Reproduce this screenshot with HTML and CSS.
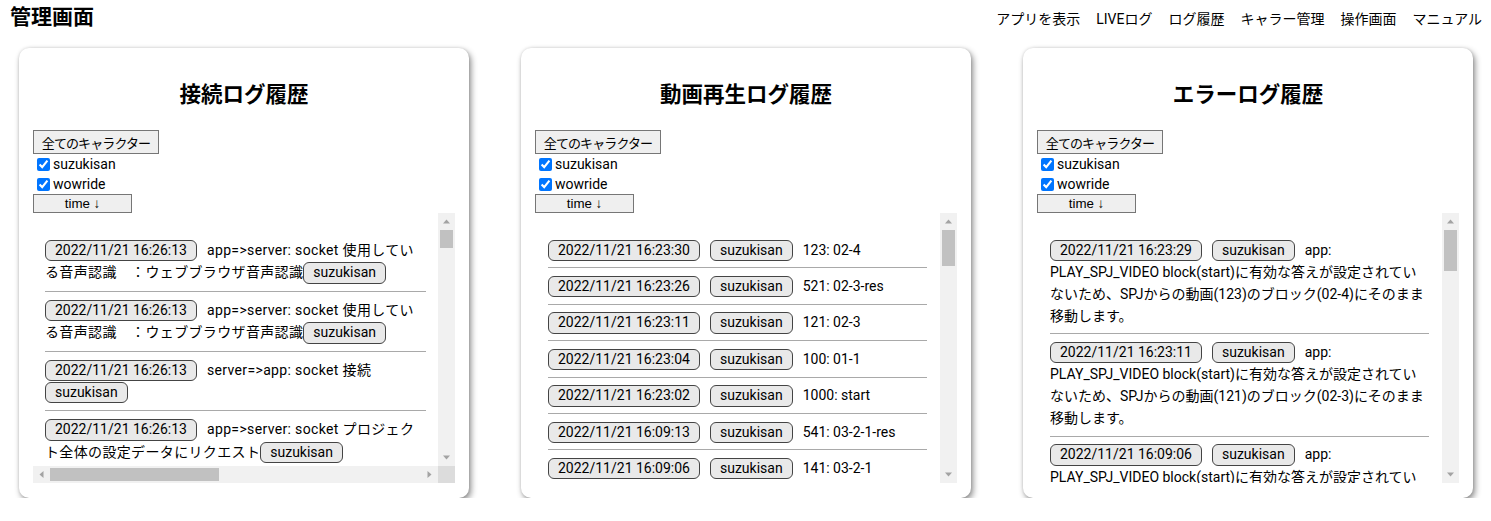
FILE: index.html
```html
<!DOCTYPE html>
<html lang="ja">
<head>
<meta charset="utf-8">
<title>管理画面</title>
<link rel="stylesheet" href="styles.css">
</head>
<body>
<header class="topbar">
  <h1 class="site-title">管理画面</h1>
  <nav class="nav">
    <a class="nav-link" href="#">アプリを表示</a>
    <a class="nav-link" href="#">LIVEログ</a>
    <a class="nav-link" href="#">ログ履歴</a>
    <a class="nav-link" href="#">キャラー管理</a>
    <a class="nav-link" href="#">操作画面</a>
    <a class="nav-link" href="#">マニュアル</a>
  </nav>
</header>

<main class="board">
  <section class="card">
    <h2 class="card-title">接続ログ履歴</h2>
    <div class="filters">
      <button class="btn-all" type="button">全てのキャラクター</button>
      <label class="chk"><input type="checkbox" checked>suzukisan</label>
      <label class="chk"><input type="checkbox" checked>wowride</label>
      <button class="btn-sort" type="button">time ↓</button>
    </div>
    <div class="log-frame log-frame--both">
      <div class="log-viewport">
        <ul class="log-list log-list--conn">
          <li class="log-row"><span class="pill">2022/11/21 16:26:13</span>app=&gt;server: socket 使用している音声認識　：ウェブブラウザ音声認識<span class="pill pill--tail">suzukisan</span></li>
          <li class="log-row"><span class="pill">2022/11/21 16:26:13</span>app=&gt;server: socket 使用している音声認識　：ウェブブラウザ音声認識<span class="pill pill--tail">suzukisan</span></li>
          <li class="log-row"><span class="pill">2022/11/21 16:26:13</span>server=&gt;app: socket 接続<span class="pill pill--tail">suzukisan</span></li>
          <li class="log-row"><span class="pill">2022/11/21 16:26:13</span>app=&gt;server: socket プロジェクト全体の設定データにリクエスト<span class="pill pill--tail">suzukisan</span></li>
          <li class="log-row"><span class="pill">2022/11/21 16:25:58</span>server=&gt;app: socket 切断<span class="pill pill--tail">suzukisan</span></li>
        </ul>
      </div>
      <div class="vbar">
        <span class="sb-btn"><svg width="17" height="17" viewBox="0 0 17 17"><path d="M5 10.5h7L8.5 6.5z" fill="#a3a3a3"/></svg></span>
        <div class="sb-track sb-track--v"><div class="sb-thumb-v" style="height:18px"></div></div>
        <span class="sb-btn"><svg width="17" height="17" viewBox="0 0 17 17"><path d="M5 6.5h7L8.5 10.5z" fill="#a3a3a3"/></svg></span>
      </div>
      <div class="hbar">
        <span class="sb-btn"><svg width="17" height="17" viewBox="0 0 17 17"><path d="M10.5 5v7L6.5 8.5z" fill="#a3a3a3"/></svg></span>
        <div class="sb-track sb-track--h"><div class="sb-thumb-h" style="width:169px"></div></div>
        <span class="sb-btn"><svg width="17" height="17" viewBox="0 0 17 17"><path d="M6.5 5v7L10.5 8.5z" fill="#a3a3a3"/></svg></span>
      </div>
      <div class="sb-corner"></div>
    </div>
  </section>

  <section class="card">
    <h2 class="card-title">動画再生ログ履歴</h2>
    <div class="filters">
      <button class="btn-all" type="button">全てのキャラクター</button>
      <label class="chk"><input type="checkbox" checked>suzukisan</label>
      <label class="chk"><input type="checkbox" checked>wowride</label>
      <button class="btn-sort" type="button">time ↓</button>
    </div>
    <div class="log-frame">
      <div class="log-viewport">
        <ul class="log-list">
          <li class="log-row"><span class="pill">2022/11/21 16:23:30</span><span class="pill">suzukisan</span>123: 02-4</li>
          <li class="log-row"><span class="pill">2022/11/21 16:23:26</span><span class="pill">suzukisan</span>521: 02-3-res</li>
          <li class="log-row"><span class="pill">2022/11/21 16:23:11</span><span class="pill">suzukisan</span>121: 02-3</li>
          <li class="log-row"><span class="pill">2022/11/21 16:23:04</span><span class="pill">suzukisan</span>100: 01-1</li>
          <li class="log-row"><span class="pill">2022/11/21 16:23:02</span><span class="pill">suzukisan</span>1000: start</li>
          <li class="log-row"><span class="pill">2022/11/21 16:09:13</span><span class="pill">suzukisan</span>541: 03-2-1-res</li>
          <li class="log-row"><span class="pill">2022/11/21 16:09:06</span><span class="pill">suzukisan</span>141: 03-2-1</li>
          <li class="log-row"><span class="pill">2022/11/21 16:08:59</span><span class="pill">suzukisan</span>540: 03-2-res</li>
        </ul>
      </div>
      <div class="vbar">
        <span class="sb-btn"><svg width="17" height="17" viewBox="0 0 17 17"><path d="M5 10.5h7L8.5 6.5z" fill="#a3a3a3"/></svg></span>
        <div class="sb-track sb-track--v"><div class="sb-thumb-v" style="height:36px"></div></div>
        <span class="sb-btn"><svg width="17" height="17" viewBox="0 0 17 17"><path d="M5 6.5h7L8.5 10.5z" fill="#a3a3a3"/></svg></span>
      </div>
    </div>
  </section>

  <section class="card">
    <h2 class="card-title">エラーログ履歴</h2>
    <div class="filters">
      <button class="btn-all" type="button">全てのキャラクター</button>
      <label class="chk"><input type="checkbox" checked>suzukisan</label>
      <label class="chk"><input type="checkbox" checked>wowride</label>
      <button class="btn-sort" type="button">time ↓</button>
    </div>
    <div class="log-frame">
      <div class="log-viewport">
        <ul class="log-list">
          <li class="log-row"><span class="pill">2022/11/21 16:23:29</span><span class="pill">suzukisan</span>app: PLAY_SPJ_VIDEO block(start)に有効な答えが設定されていないため、SPJからの動画(123)のブロック(02-4)にそのまま移動します。</li>
          <li class="log-row"><span class="pill">2022/11/21 16:23:11</span><span class="pill">suzukisan</span>app: PLAY_SPJ_VIDEO block(start)に有効な答えが設定されていないため、SPJからの動画(121)のブロック(02-3)にそのまま移動します。</li>
          <li class="log-row"><span class="pill">2022/11/21 16:09:06</span><span class="pill">suzukisan</span>app: PLAY_SPJ_VIDEO block(start)に有効な答えが設定されていないため、SPJからの動画(141)のブロック(03-2-1)にそのまま移動します。</li>
        </ul>
      </div>
      <div class="vbar">
        <span class="sb-btn"><svg width="17" height="17" viewBox="0 0 17 17"><path d="M5 10.5h7L8.5 6.5z" fill="#a3a3a3"/></svg></span>
        <div class="sb-track sb-track--v"><div class="sb-thumb-v" style="height:41px"></div></div>
        <span class="sb-btn"><svg width="17" height="17" viewBox="0 0 17 17"><path d="M5 6.5h7L8.5 10.5z" fill="#a3a3a3"/></svg></span>
      </div>
    </div>
  </section>
</main>
</body>
</html>
```

FILE: styles.css
```css
* { box-sizing: border-box; }

body {
  margin: 0;
  font-family: Roboto, "Noto Sans CJK JP", sans-serif;
  font-size: 14px;
  color: #000;
  background: #fff;
}

.topbar {
  display: flex;
  justify-content: space-between;
  align-items: center;
  height: 35px;
  padding: 0 9px 0 10px;
}

.site-title {
  margin: 0;
  font-size: 21px;
  line-height: 1;
  font-weight: 700;
}

.nav {
  display: flex;
  gap: 16px;
}

.nav-link {
  color: #000;
  text-decoration: none;
  font-size: 14px;
}

.board {
  display: flex;
  gap: 52px;
  padding: 13px 18px 0 19px;
}

.card {
  flex: none;
  width: 450px;
  height: 450px;
  padding: 0 14px 15px;
  display: flex;
  flex-direction: column;
  background: #fff;
  border-radius: 10px;
  box-shadow: 2px 3px 6px rgba(0, 0, 0, 0.45), 0 0 3px rgba(0, 0, 0, 0.12);
}

.card-title {
  margin: 32px 0 20px;
  font-size: 21.5px;
  line-height: 30px;
  font-weight: 700;
  text-align: center;
}

.filters {
  display: flex;
  flex-direction: column;
  align-items: flex-start;
}

.btn-all {
  width: 126px;
  height: 24px;
  padding: 0 6px;
  font: 13px "Liberation Sans", "Noto Sans CJK JP", sans-serif;
  letter-spacing: -0.9px;
  color: #000;
  background: #efefef;
  border: 1px solid #767676;
  border-radius: 0;
}

.chk {
  display: flex;
  align-items: center;
  height: 20px;
  font-size: 14px;
}

.chk input {
  width: 13px;
  height: 13px;
  margin: 1px 3px 0 4px;
}

.btn-sort {
  width: 99px;
  height: 19px;
  padding: 0;
  font: 13.33px/15px "Liberation Sans", "DejaVu Sans", sans-serif;
  color: #000;
  background: #efefef;
  border: 1px solid #767676;
  border-radius: 0;
}

/* scroll frame: viewport + drawn scrollbars */
.log-frame {
  flex: 1;
  min-height: 0;
  display: grid;
  grid-template-columns: minmax(0, 1fr) 17px;
  grid-template-rows: minmax(0, 1fr);
}

.log-frame--both {
  grid-template-rows: minmax(0, 1fr) 17px;
}

.log-viewport {
  min-height: 0;
  overflow: hidden;
}

.vbar {
  display: flex;
  flex-direction: column;
  background: #f1f1f1;
}

.hbar {
  display: flex;
  background: #f1f1f1;
}

.sb-btn {
  flex: none;
  width: 17px;
  height: 17px;
  display: block;
}

.sb-btn svg {
  display: block;
}

.sb-track {
  flex: 1;
  display: flex;
}

.sb-track--v {
  flex-direction: column;
  padding: 0 2px;
}

.sb-track--h {
  padding: 2px 0;
}

.sb-thumb-v,
.sb-thumb-h {
  flex: none;
  background: #c1c1c1;
}

.sb-corner {
  background: #dcdcdc;
}

/* log list */
.log-list {
  list-style: none;
  margin: 0;
  padding: 19px 13px 0;
}

.log-list--conn {
  padding: 19px 12px 0;
}

.log-row {
  padding: 6.5px 0 6.5px;
  border-bottom: 1px solid #a9a9a9;
  line-height: 22px;
}

.log-list--conn .log-row {
  padding: 7px 0 7px;
  letter-spacing: 0.35px;
}

.pill {
  display: inline-block;
  margin-right: 10px;
  padding: 1px 9px;
  font-size: 14px;
  line-height: 17.4px;
  letter-spacing: 0;
  background: #e9e9e9;
  border: 1px solid #444;
  border-radius: 6px;
}

.pill--tail {
  margin-right: 0;
}
```
